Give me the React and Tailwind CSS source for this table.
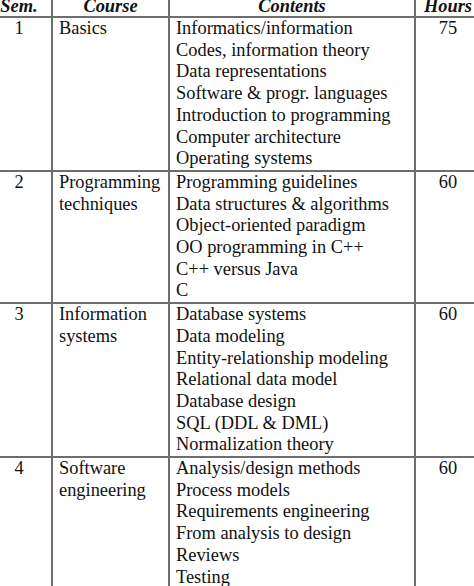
import React from "react";

const rows = [
  {
    sem: "1",
    course: ["Basics"],
    contents: [
      "Informatics/information",
      "Codes, information theory",
      "Data representations",
      "Software & progr. languages",
      "Introduction to programming",
      "Computer architecture",
      "Operating systems",
    ],
    hours: "75",
  },
  {
    sem: "2",
    course: ["Programming", "techniques"],
    contents: [
      "Programming guidelines",
      "Data structures & algorithms",
      "Object-oriented paradigm",
      "OO programming in C++",
      "C++ versus Java",
      "C",
    ],
    hours: "60",
  },
  {
    sem: "3",
    course: ["Information", "systems"],
    contents: [
      "Database systems",
      "Data modeling",
      "Entity-relationship modeling",
      "Relational data model",
      "Database design",
      "SQL (DDL & DML)",
      "Normalization theory",
    ],
    hours: "60",
  },
  {
    sem: "4",
    course: ["Software", "engineering"],
    contents: [
      "Analysis/design methods",
      "Process models",
      "Requirements engineering",
      "From analysis to design",
      "Reviews",
      "Testing",
    ],
    hours: "60",
  },
];

const cols = "grid grid-cols-[51px_117px_246px_1fr]";
const line = "border-l-2 border-[#6e6e6e]";

export default function App() {
  return (
    <div
      className="w-[474px] h-[586px] overflow-hidden bg-white text-[#111] text-[18.4px] leading-[21.7px]"
      style={{ fontFamily: '"Liberation Serif", "Times New Roman", serif' }}
    >
      <div className={`${cols} h-[16px] overflow-hidden font-bold italic`}>
        <div className="pr-[13px] text-center">
          <div className="-mt-[4px]">Sem.</div>
        </div>
        <div className={`${line} text-center`}>
          <div className="-mt-[4px]">Course</div>
        </div>
        <div className={`${line} text-center`}>
          <div className="-mt-[4px]">Contents</div>
        </div>
        <div className={`${line} pl-[6px] text-center`}>
          <div className="-mt-[4px]">Hours</div>
        </div>
      </div>
      {rows.map((r) => (
        <div key={r.sem} className={`${cols} border-t-2 border-[#6e6e6e]`}>
          <div className="pr-[13px] text-center">{r.sem}</div>
          <div className={`${line} px-[6px]`}>
            {r.course.map((c) => (
              <div key={c}>{c}</div>
            ))}
          </div>
          <div className={`${line} px-[6px]`}>
            {r.contents.map((c) => (
              <div key={c} className="whitespace-nowrap">
                {c}
              </div>
            ))}
          </div>
          <div className={`${line} pl-[6px] text-center`}>{r.hours}</div>
        </div>
      ))}
    </div>
  );
}
